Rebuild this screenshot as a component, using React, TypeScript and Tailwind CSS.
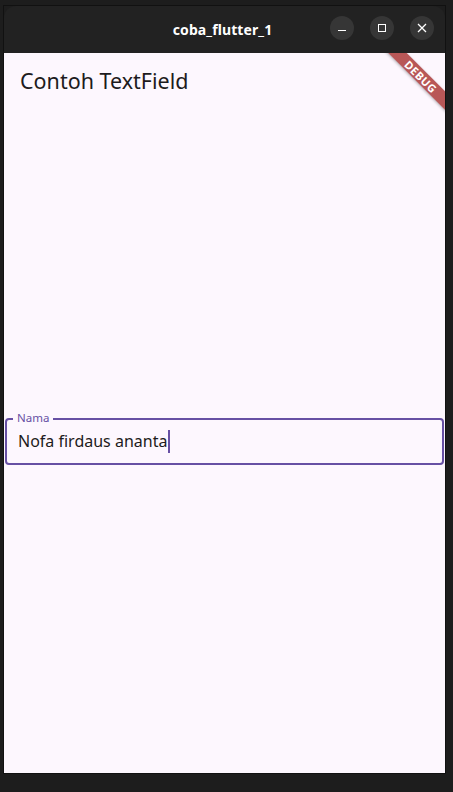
import React from "react";

const WinButton = ({ children }: { children: React.ReactNode }) => (
  <div className="w-6 h-6 rounded-full bg-[#363636] flex items-center justify-center text-white">
    {children}
  </div>
);

const App = () => {
  return (
    <div className="w-[453px] h-[792px] bg-[#1d1d1d] pt-[6px] pl-[4px] overflow-hidden font-['Noto_Sans',sans-serif]">
      <div className="w-[441px] h-[767px] flex flex-col shadow-[0_0_0_1px_#111]">
        <div className="h-[47px] bg-[#222222] rounded-t-[12px] relative flex items-center justify-center">
          <span className="text-white text-[14px] font-bold tracking-[0.1px] -ml-1">coba_flutter_1</span>
          <div className="absolute right-[11px] top-[10px] flex gap-4">
            <WinButton>
              <div className="w-2 h-px bg-white mt-1" />
            </WinButton>
            <WinButton>
              <div className="w-2 h-2 border border-white" />
            </WinButton>
            <WinButton>
              <svg width="10" height="10" viewBox="0 0 10 10">
                <path d="M1 1L9 9M9 1L1 9" stroke="white" strokeWidth="1.3" />
              </svg>
            </WinButton>
          </div>
        </div>
        <div className="flex-1 bg-[#fdf7fe] flex flex-col relative overflow-hidden">
          <div className="h-14 flex items-center pl-4">
            <span className="text-[#1d1b20] text-[21.5px]">Contoh TextField</span>
          </div>
          <div className="flex-1 flex items-center">
            <div className="relative w-full mx-px h-[47px] border-2 border-[#6750a4] rounded-[4px] flex items-center px-[11px]">
              <span className="absolute -top-[10px] left-[6px] bg-[#fdf7fe] px-[4px] text-[11.5px] leading-[16px] text-[#6750a4]">
                Nama
              </span>
              <span className="text-[#1d1b20] text-[16px]">Nofa firdaus ananta</span>
              <span className="w-[2px] h-[23px] bg-[#6750a4] ml-px" />
            </div>
          </div>
          <div className="absolute top-[17px] -right-[36px] w-[120px] h-[13px] bg-[#b04545]/90 rotate-45 flex items-center justify-center shadow-[0_1px_3px_rgba(0,0,0,0.3)]">
            <span className="text-white text-[11px] font-bold leading-none tracking-[0.5px]">DEBUG</span>
          </div>
        </div>
      </div>
    </div>
  );
};

export default App;
